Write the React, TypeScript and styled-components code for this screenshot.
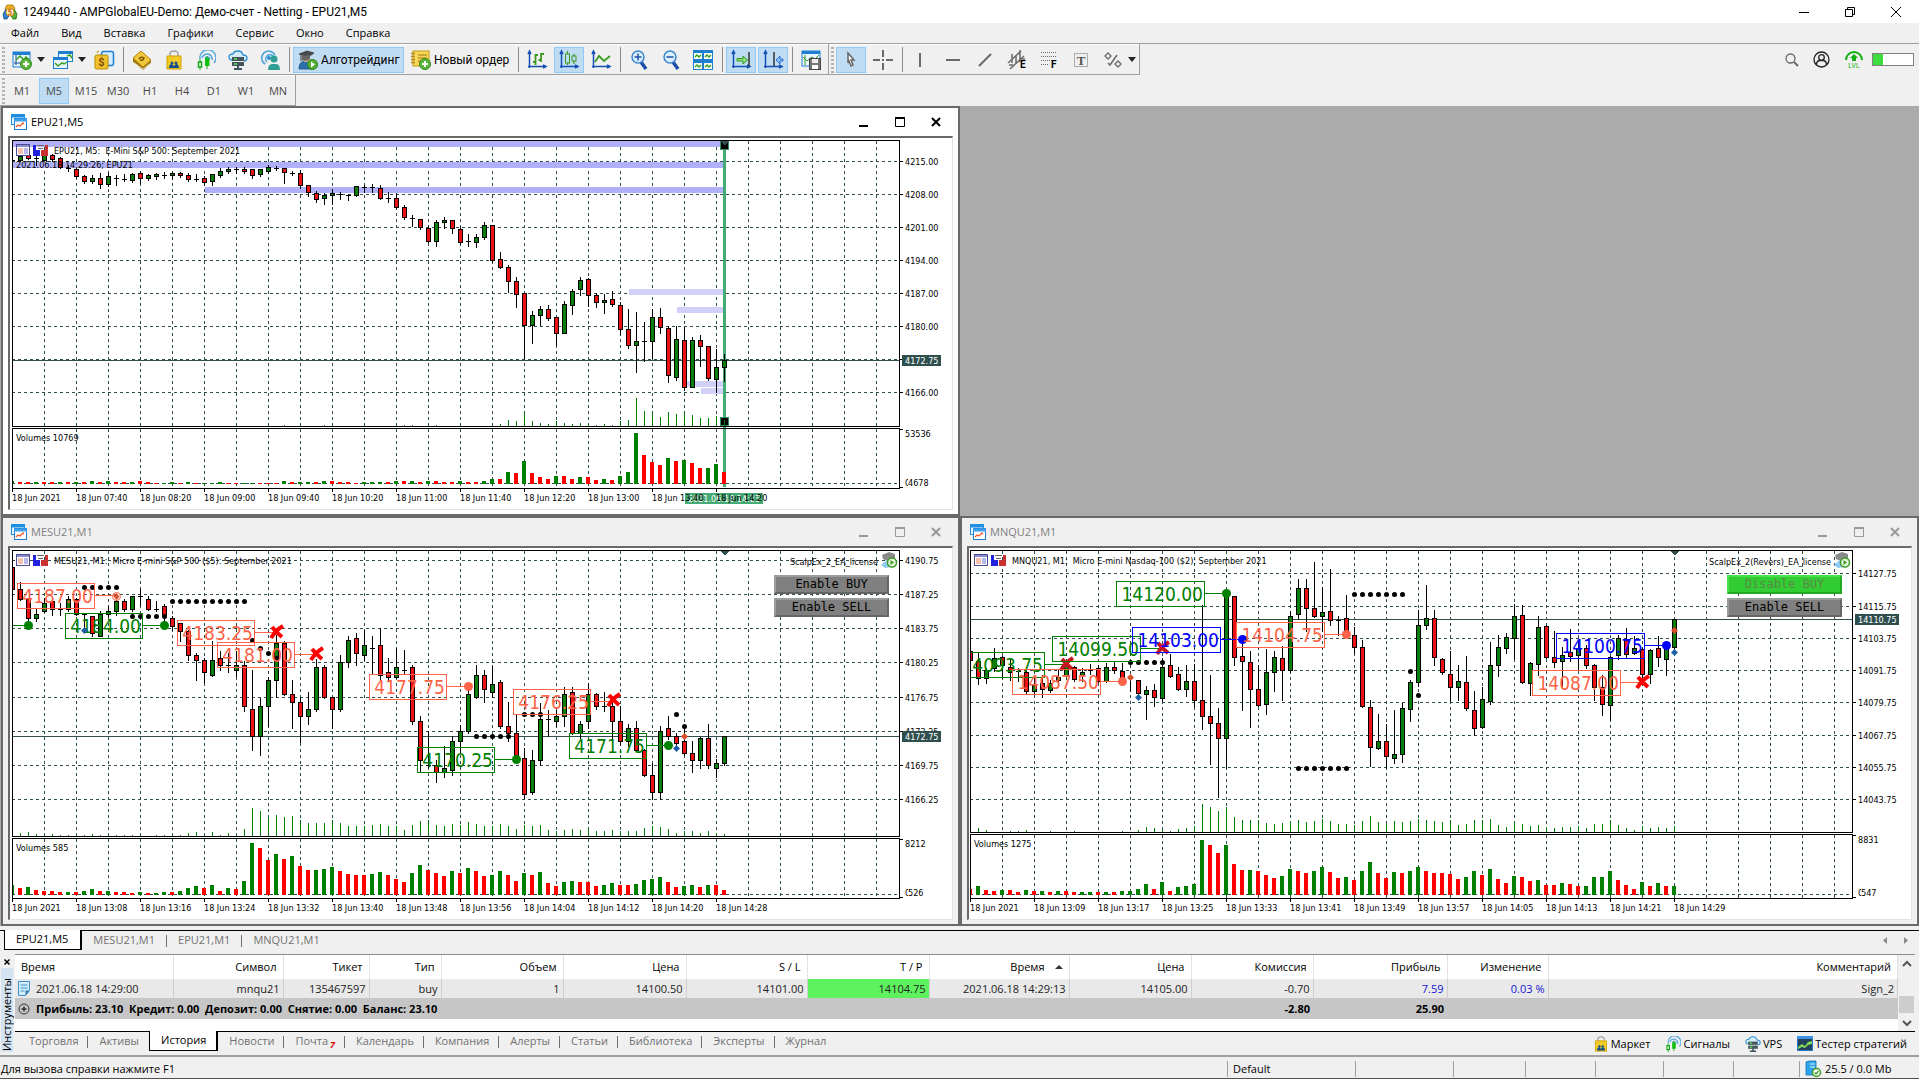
import React from 'react';
import styled, { createGlobalStyle, css } from 'styled-components';

const UI_FONT = '"Open Sans", "Noto Sans", sans-serif';
const CHART_FONT = '"DejaVu Sans Condensed", "DejaVu Sans", sans-serif';
const FACE = '#f0f0f0';
const SLATE = '#2f4f4f';
const TOMATO = '#ff6347';
const GREEN = '#008000';
const BLUE = '#0000ff';

const GlobalStyle = createGlobalStyle`
  * { box-sizing: border-box; }
  html, body { margin: 0; padding: 0; }
  body { font-family: ${UI_FONT}; font-size: 11px; line-height: 16px; color: #000; background: ${FACE}; overflow: hidden; }
  button { font: inherit; color: inherit; background: none; border: 0; padding: 0; margin: 0; cursor: default; }
  svg { display: block; flex: none; }
`;

/* ---------- frame ---------- */

const Page = styled.div`
  display: flex;
  flex-direction: column;
  min-height: 100vh;
  background: ${FACE};
`;

const TitleBar = styled.header`
  display: flex;
  align-items: center;
  height: 23px;
  padding-left: 2px;
  background: #fff;
`;

const TitleText = styled.h1`
  flex: 1;
  margin: 0 0 0 5px;
  font-family: Roboto, "Open Sans", sans-serif;
  font-size: 12px;
  line-height: 16px;
  font-weight: 400;
`;

const CaptionButton = styled.button`
  display: grid;
  place-items: center;
  width: 46px;
  height: 22px;
`;

const MenuBar = styled.nav`
  display: flex;
  height: 21px;
  border-bottom: 1px solid #a0a0a0;
`;

const MenuItem = styled.button`
  padding: 0 11px;
`;

const ToolRow = styled.div`
  display: flex;
  align-items: stretch;
  height: 31px;
`;

const ToolBar = styled.div`
  display: flex;
  align-items: center;
  gap: 2px;
  padding: 2px 2px 1px;
  border-right: 1px solid #a0a0a0;
  border-bottom: 1px solid #a0a0a0;
  box-shadow: inset 0 1px 0 #fff;
`;

const Grip = styled.span`
  width: 3px;
  height: 26px;
  background: repeating-linear-gradient(#b4b4b4 0 2px, transparent 2px 4px);
`;

const ToolButton = styled.button<{ $on?: boolean; $w?: number }>`
  display: flex;
  align-items: center;
  justify-content: ${(p) => (p.$w ? 'flex-start' : 'center')};
  gap: 3px;
  width: ${(p) => p.$w ?? 30}px;
  height: 26px;
  padding: 0 ${(p) => (p.$w ? 4 : 0)}px;
  white-space: nowrap;
  font-family: Roboto, "Open Sans", sans-serif;
  font-size: 12px;
  border: 1px solid transparent;
  ${(p) =>
    p.$on &&
    css`
      background: #c0dcf3;
      border-color: #90c8f6;
    `}
`;

const CaretButton = styled.button`
  display: grid;
  place-items: center;
  width: 11px;
  height: 26px;
  margin-left: -4px;
`;

const ToolSep = styled.span`
  width: 1px;
  height: 25px;
  margin: 0 1px 0 2px;
  background: #8c8c8c;
`;

const PeriodButton = styled(ToolButton)`
  color: #4a4a4a;
  font-family: ${UI_FONT};
  font-size: 11px;
`;

const RowEnd = styled.div`
  display: flex;
  flex: 1;
  align-items: center;
  justify-content: flex-end;
  gap: 14px;
  padding-right: 5px;
`;

const Battery = styled.span`
  width: 42px;
  height: 13px;
  margin-left: -6px;
  border: 1px solid #808080;
  background: linear-gradient(90deg, #3fdc3f 10px, #fff 10px);
`;

/* ---------- chart windows ---------- */

const Workspace = styled.main`
  display: grid;
  flex: 1;
  grid-template-columns: 1fr 1fr;
  grid-template-rows: 1fr 1fr;
  min-height: 820px;
  padding-left: 1px;
  background: #ababab;
`;

const Window = styled.section<{ $active?: boolean; $row: number; $col: number }>`
  display: flex;
  flex-direction: column;
  grid-row: ${(p) => p.$row};
  grid-column: ${(p) => p.$col};
  min-width: 0;
  padding: 0 5px 4px;
  border: 2px solid #696969;
  background: ${(p) => (p.$active ? '#fff' : FACE)};
  color: ${(p) => (p.$active ? '#000' : '#808080')};
`;

const WindowHead = styled.div`
  display: flex;
  align-items: center;
  height: 28px;
  padding: 0 6px 0 3px;
`;

const WindowTitle = styled.h2`
  flex: 1;
  margin: 0 0 0 4px;
  font-size: 11px;
  line-height: 16px;
  font-weight: 400;
  color: inherit;
`;

const WindowButton = styled.button`
  display: grid;
  place-items: center;
  width: 36px;
  height: 20px;
  &:last-child { width: 22px; margin-left: 7px; }
`;

const Client = styled.div`
  position: relative;
  flex: 1;
  min-height: 0;
  overflow: hidden;
  border: solid #696969;
  border-width: 2px 1px 1px 2px;
  border-right-color: #e3e3e3;
  border-bottom-color: #e3e3e3;
  background: #fff;
`;

const ExpertPanel = styled.div<{ $right: number }>`
  position: absolute;
  top: 27px;
  right: ${(p) => p.$right}px;
  display: flex;
  flex-direction: column;
  gap: 4px;
  width: 115px;
`;

const ExpertButton = styled.button<{ $live?: boolean }>`
  height: 19px;
  border: 2px solid;
  border-color: ${(p) => (p.$live ? '#4be04b #1faa1f #1faa1f #4be04b' : '#9c9c9c #666 #666 #9c9c9c')};
  background: ${(p) => (p.$live ? '#32cd32' : '#808080')};
  color: ${(p) => (p.$live ? '#5a8a4a' : '#000')};
  font-family: "DejaVu Sans Mono", "Liberation Mono", monospace;
  font-size: 12px;
  line-height: 15px;
`;

/* ---------- bottom area ---------- */

const TabStrip = styled.div`
  display: flex;
  height: 20px;
  margin-top: 4px;
  padding-left: 4px;
  border-top: 1px solid #000;
`;

const StripTab = styled.button<{ $on?: boolean; $line?: boolean }>`
  position: relative;
  height: 19px;
  padding: 0 12px 2px 11px;
  color: ${(p) => (p.$on ? '#000' : '#707070')};
  ${(p) =>
    p.$on &&
    css`
      height: 20px;
      margin-top: -1px;
      background: #fff;
      border: solid #000;
      border-width: 0 2px 1px 1px;
    `}
  ${(p) =>
    p.$line &&
    css`
      &::after { content: ''; position: absolute; right: 0; top: 4px; width: 1px; height: 12px; background: #707070; }
    `}
`;

const StripEnd = styled.div`
  display: flex;
  flex: 1;
  justify-content: flex-end;
  align-items: center;
  gap: 17px;
  padding-right: 10px;
`;

const Toolbox = styled.section`
  display: grid;
  grid-template-columns: 15px 1fr 4px;
  height: 103px;
  margin-top: 4px;
  border-bottom: 2px solid #a0a0a0;
`;

const ToolboxRail = styled.div`
  display: flex;
  flex-direction: column;
  align-items: center;
  padding: 1px 1px 3px 0;
`;

const RailClose = styled.button`
  height: 13px;
  display: grid;
  place-items: center;
`;

const RailName = styled.h2`
  flex: 1;
  width: 12px;
  margin: 0;
  padding-top: 1px;
  background: #d3e3f2;
  writing-mode: vertical-rl;
  transform: rotate(180deg);
  font-size: 11px;
  line-height: 12px;
  font-weight: 400;
`;

const ToolboxBody = styled.div`
  display: flex;
  flex-direction: column;
  min-width: 0;
  border-top: 1px solid #8c8c8c;
`;

const Grid = styled.div`
  display: flex;
  height: 76px;
  background: #fff;
`;

const Deals = styled.table`
  flex: 1;
  align-self: flex-start;
  width: 0;
  table-layout: fixed;
  border-collapse: collapse;
`;

const HeadCell = styled.th<{ $left?: boolean }>`
  height: 24px;
  padding: 0 6px;
  font-weight: 400;
  text-align: ${(p) => (p.$left ? 'left' : 'right')};
  white-space: nowrap;
  border-right: 1px solid #e2e2e2;
  svg { display: inline-block; margin-left: 10px; vertical-align: 2px; }
`;

const Cell = styled.td<{ $tone?: 'profit' | 'hit'; $left?: boolean }>`
  height: 19px;
  padding: 0 3px;
  text-align: ${(p) => (p.$left ? 'left' : 'right')};
  white-space: nowrap;
  background: ${(p) => (p.$tone === 'hit' ? '#5ef25e' : '#e9e9e9')};
  color: ${(p) => (p.$tone === 'profit' ? '#1414d8' : '#222')};
  border-right: 1px solid #cfcfcf;
`;

const CellInner = styled.span`
  display: flex;
  align-items: center;
  gap: 6px;
`;

const SumCell = styled.td`
  height: 21px;
  padding: 0 3px;
  background: #c6c6c6;
  font-weight: 700;
  text-align: right;
  white-space: nowrap;
`;

const Scroll = styled.div`
  display: flex;
  flex-direction: column;
  justify-content: space-between;
  align-items: center;
  width: 17px;
  background: ${FACE};
`;

const ScrollThumb = styled.span`
  width: 15px;
  height: 17px;
  margin: auto 0 1px;
  background: #cdcdcd;
`;

const ScrollButton = styled.button`
  display: grid;
  place-items: center;
  width: 17px;
  height: 17px;
`;

const PanelTabs = styled.div`
  display: flex;
  height: 22px;
  padding-left: 3px;
  border-top: 1px solid #000;
`;

const PanelTab = styled(StripTab)`
  height: 20px;
  padding: 0 10px 2px 11px;
`;

const Unread = styled.sub`
  color: #e00000;
  font-size: 9px;
  font-weight: 700;
  font-style: italic;
  line-height: 0;
  margin-left: 2px;
`;

const Services = styled.div`
  display: flex;
  flex: 1;
  justify-content: flex-end;
  align-items: center;
  gap: 15px;
  padding: 2px 8px 0 0;
`;

const Service = styled.button`
  display: flex;
  align-items: center;
  gap: 2px;
  height: 20px;
`;

const StatusBar = styled.footer`
  display: flex;
  align-items: stretch;
  height: 22px;
  padding: 4px 0 1px 1px;
  border-bottom: 1px solid #505050;
`;

const StatusField = styled.span<{ $w?: number }>`
  display: flex;
  align-items: center;
  gap: 4px;
  padding-left: 5px;
  ${(p) => (p.$w ? `width: ${p.$w}px; border-left: 1px solid #a0a0a0;` : 'flex: 1; padding-left: 0;')}
`;

/* ---------- icons ---------- */

const Svg = ({ s = 20, h, children }: { s?: number; h?: number; children: React.ReactNode }) => (
  <svg width={s} height={h ?? s} viewBox={`0 0 ${s} ${h ?? s}`} fill="none" overflow="visible" aria-hidden="true">
    {children}
  </svg>
);

const PlusBadge = ({ x = 14, y = 14 }) => (
  <g>
    <circle cx={x} cy={y} r="5.5" fill="#5cb83a" stroke="#2f8a1a" />
    <path d={`M${x - 3} ${y}h6M${x} ${y - 3}v6`} stroke="#fff" strokeWidth="2" />
  </g>
);

const Caret = () => (
  <Svg s={8} h={5}>
    <path d="M0 0h8L4 5z" fill="#222" />
  </Svg>
);

const AppLogo = () => (
  <Svg s={16}>
    <path d="M5 1h6l2 4-2 3H5L3 5z" fill="#f0b323" stroke="#a87408" strokeWidth=".8" />
    <path d="M1 10l3-5 4 5-3 5H2z" fill="#2f7fd0" stroke="#174f90" strokeWidth=".8" />
    <path d="M15 10l-3-5-4 5 3 5h3z" fill="#53ad36" stroke="#2a7016" strokeWidth=".8" />
    <circle cx="8" cy="8" r="4" fill="#fff6dc" stroke="#d08a10" />
    <text x="8" y="11" fontSize="8" fontWeight="700" textAnchor="middle" fill="#d06a00">5</text>
  </Svg>
);

const NewChartIcon = () => (
  <Svg>
    <rect x="1" y="2" width="17" height="15" fill="#eaf5ff" stroke="#1e7fd0" />
    <path d="M1 3.500h17" stroke="#1e7fd0" strokeWidth="3" />
    <path d="M4 5v10M2 13h12" stroke="#1a4f90" />
    <path d="M4 10l4-4 4 4 2-3 3 3" stroke="#3da01e" strokeWidth="1.500" />
    <PlusBadge />
  </Svg>
);

const ProfilesIcon = () => (
  <Svg>
    <rect x="5.500" y="1.500" width="14" height="10" fill="#eaf5ff" stroke="#1e7fd0" />
    <path d="M5 2.500h15" stroke="#1e7fd0" strokeWidth="3" />
    <path d="M14 6l3-1 2 3" stroke="#3da01e" strokeWidth="1.500" />
    <rect x=".5" y="7.500" width="14" height="11" fill="#eaf5ff" stroke="#1e7fd0" />
    <path d="M0 8.500h15" stroke="#1e7fd0" strokeWidth="3" />
    <path d="M2 13l3 3 4-3 2 1 3-2" stroke="#3da01e" strokeWidth="1.500" />
  </Svg>
);

const SymbolsIcon = () => (
  <Svg>
    <rect x="7.500" y="1.500" width="12" height="14" rx="2" fill="#d4ecff" stroke="#1e7fd0" strokeWidth="1.500" />
    <path d="M3 3q0-2 2-2" stroke="#b58a00" />
    <rect x="1" y="5" width="13" height="14" rx="1.500" fill="#f2c12e" stroke="#b58a00" />
    <text x="7.500" y="16" fontSize="11" fontWeight="700" textAnchor="middle" fill="#7a4d00">$</text>
  </Svg>
);

const EditorIcon = () => (
  <Svg>
    <path d="M1 8l8-7 10 9v3l-8 7L1 12z" fill="#9a7410" />
    <path d="M1 8l8-7 10 9-8 7z" fill="#f2c93c" stroke="#b8860b" />
    <path d="M1 12l10 7 8-6" stroke="#e8dcae" />
    <path d="M7 9q2-3 5-1-1 3-4 2" stroke="#7a5600" strokeWidth="1.500" />
  </Svg>
);

const MarketIcon = ({ s = 20 }) => (
  <svg width={s} height={s} viewBox="0 0 20 20" fill="none" aria-hidden="true">
    <path d="M6 8V4q0-3 4-3t4 3v4" stroke="#a3a3a3" strokeWidth="1.500" />
    <path d="M3 6h14v13H3z" fill="#f3cb26" stroke="#cda100" />
    <circle cx="8" cy="13" r="1.500" fill="#134f8c" />
    <circle cx="12" cy="13" r="1.500" fill="#134f8c" />
    <path d="M5 18q0-4 3-4l2 2 2-2q3 0 3 4z" fill="#134f8c" />
  </svg>
);

const SignalsIcon = ({ s = 20 }) => (
  <svg width={s} height={s} viewBox="0 0 20 20" fill="none" aria-hidden="true">
    <path d="M4 9a8 8 0 1 1 14 4M6 8a5 5 0 0 1 10 2M9 8a3 3 0 0 1 5 1" stroke="#5aa9de" strokeWidth="1.500" />
    <path d="M4 9v11M11 6v13" stroke="#14a514" />
    <rect x="2.500" y="12" width="3" height="5" fill="#fff" stroke="#14a514" strokeWidth="1.500" />
    <rect x="9" y="8" width="4.500" height="8" fill="#10c010" />
  </svg>
);

const VpsIcon = ({ s = 20 }) => (
  <svg width={s} height={s} viewBox="0 0 20 20" fill="none" aria-hidden="true">
    <path d="M4 10q-3 0-3-3t4-3q1-3 5-3t5 4q4 0 4 3t-3 3" fill="#d6ecfb" stroke="#2f8fd4" strokeWidth="1.300" />
    <rect x="4" y="7" width="12" height="4" fill="#41555a" />
    <rect x="4" y="12" width="12" height="4" fill="#41555a" />
    <path d="M6 9h3M6 14h3" stroke="#5de25d" strokeWidth="1.500" />
    <path d="M10 16v3M6 19h8" stroke="#41555a" strokeWidth="2" />
  </svg>
);

const CommunityIcon = () => (
  <Svg>
    <path d="M5 14a7 7 0 1 1 10-9M7 12a4 4 0 1 1 6-6" stroke="#4aa3da" strokeWidth="1.500" />
    <circle cx="9" cy="8" r="2" fill="#2b8fd0" />
    <circle cx="14" cy="9" r="3.500" fill="#2f9e94" />
    <path d="M8 20q0-6 4-6h4q4 0 4 6z" fill="#2f9e94" />
  </Svg>
);

const AlgoIcon = ({ s = 20 }) => (
  <svg width={s} height={s} viewBox="0 0 20 20" fill="none" aria-hidden="true">
    <path d="M1 19q0-7 5-8h3q5 1 5 8z" fill="#2c6fad" stroke="#1c4a78" strokeWidth=".8" />
    <circle cx="8" cy="8" r="4" fill="#d9b48f" />
    <path d="M1 4l8-3 7 2-6 4z" fill="#4a4a4a" stroke="#222" strokeWidth=".6" />
    <path d="M4 6v4q5 2 8-1V5" fill="#666" />
    <path d="M3 5v6" stroke="#333" />
    <circle cx="14.500" cy="14.500" r="5" fill="#55b036" stroke="#2e7f17" />
    <path d="M13 11.500l4 3-4 3z" fill="#fff" />
  </svg>
);

const OrderIcon = () => (
  <Svg>
    <rect x="2" y="1" width="16" height="15" fill="#f7d65a" stroke="#c79a10" />
    <path d="M7 5h9M7 8h9M7 11h9" stroke="#9a7410" />
    <path d="M0 3.500h4M0 6.500h4M0 9.500h4M0 12.500h4" stroke="#b08a20" strokeWidth="1.500" />
    <PlusBadge x={14} y={14} />
  </Svg>
);

const Axes = () => (
  <path d="M2.500 18V2M1 16.500h17M1 4l1.500-3L4 4M16 15l3 1.500-3 1.500" stroke="#1450b4" strokeWidth="1.500" />
);

const BarsIcon = () => (
  <Svg>
    <Axes />
    <path d="M8.500 4v11M6 12h2.500M8.500 5H11M14 3v9M11.500 10H14M14 4h3" stroke="#3a9a22" strokeWidth="1.800" />
  </Svg>
);
const CandlesIcon = () => (
  <Svg>
    <Axes />
    <path d="M8.500 1v14M15 4v10" stroke="#3a9a22" strokeWidth="1.200" />
    <rect x="6.500" y="4" width="4" height="9" fill="#c0dcf3" stroke="#3a9a22" />
    <rect x="13" y="6" width="4" height="5" fill="#c0dcf3" stroke="#3a9a22" />
  </Svg>
);
const LineIcon = () => (
  <Svg>
    <Axes />
    <path d="M4 12l4-6 5 5 6-5" stroke="#3a9a22" strokeWidth="1.800" />
  </Svg>
);

const ZoomIcon = ({ plus }: { plus?: boolean }) => (
  <Svg>
    <path d="M12 12l5 7" stroke="#1d4fa8" strokeWidth="3.500" />
    <circle cx="9" cy="7" r="6" fill="#dcefff" stroke="#3a86cc" strokeWidth="1.500" />
    <path d={plus ? 'M5.500 7h7M9 3.500v7' : 'M5.500 7h7'} stroke="#1d4fa8" strokeWidth="1.500" />
  </Svg>
);

const TileIcon = () => (
  <Svg>
    {[[0, 0], [10, 0], [0, 10], [10, 10]].map(([x, y]) => (
      <g key={`${x}${y}`} transform={`translate(${x} ${y})`}>
        <rect x=".5" y=".5" width="9" height="9" fill="#f4fff0" stroke="#1e7fd0" />
        <path d="M0 1.500h10" stroke="#1e7fd0" strokeWidth="3" />
        <path d="M2 7l2-2 2 2 2-2" stroke="#3a9a22" strokeWidth="1.300" />
      </g>
    ))}
  </Svg>
);

const ScrollEndIcon = () => (
  <Svg>
    <Axes />
    <path d="M18 2v14" stroke="#333" strokeWidth="1.500" />
    <path d="M6 8.500h6V6l4.500 4-4.500 4v-3H6z" fill="#8ee07a" stroke="#2f9a1a" />
  </Svg>
);
const ShiftIcon = () => (
  <Svg>
    <Axes />
    <path d="M11 2v14" stroke="#333" strokeWidth="1.500" />
    <path d="M20 9h-3V6l-4 4 4 4v-3h3z" fill="#8cc0f5" stroke="#2a70d0" />
  </Svg>
);

const TemplateIcon = () => (
  <Svg>
    <rect x="1" y="1" width="18" height="15" fill="#eaf5ff" stroke="#1e7fd0" />
    <path d="M1 2.500h18" stroke="#1e7fd0" strokeWidth="3" />
    <path d="M4 5v10M2 7l4 4 5-4 3 2 4-4" stroke="#3a9a22" />
    <rect x="8.500" y="8.500" width="11" height="11" fill="#787878" stroke="#444" />
    <rect x="11" y="9" width="6" height="4" fill="#eee" />
    <rect x="11" y="15" width="6" height="4" fill="#fff" />
  </Svg>
);

const CursorIcon = () => (
  <Svg>
    <path d="M7 3l6 7h-3l2 5-2 1-2-5-1 2z" fill="#fff" stroke="#666" strokeWidth="1.500" />
  </Svg>
);
const CrosshairIcon = () => (
  <Svg>
    <path d="M0 10h7M13 10h7M10 0v7M10 13v7M9 10h2" stroke="#6a6a6a" strokeWidth="2" />
  </Svg>
);
const StrokeIcon = ({ d }: { d: string }) => (
  <Svg>
    <path d={d} stroke="#6a6a6a" strokeWidth="2" />
  </Svg>
);
const ChannelIcon = () => (
  <Svg>
    <path d="M1 13L14 1M3 19L17 6M5 4v9M9 5v9M13 0v12M2 15h4M12 9h6" stroke="#6a6a6a" strokeWidth="1.500" />
    <text x="13" y="18" fontSize="10" fontWeight="700" fill="#000">E</text>
  </Svg>
);
const FiboIcon = () => (
  <Svg>
    <path d="M2 2.500h15M2 6.500h15M2 10.500h15M2 14.500h7" stroke="#6a6a6a" strokeDasharray="1 1" />
    <text x="12" y="18" fontSize="10" fontWeight="700" fill="#000">F</text>
  </Svg>
);
const TextIcon = () => (
  <Svg>
    <rect x="3.500" y="3.500" width="13" height="13" stroke="#6a6a6a" strokeDasharray="1 1" />
    <text x="10" y="15" fontSize="13" fontWeight="700" textAnchor="middle" fill="#555" fontFamily="Liberation Serif, serif">T</text>
  </Svg>
);
const ShapesIcon = () => (
  <Svg>
    <path d="M5 3l3 3-3 3-3-3zM15 11l3 3-3 3-3-3z" stroke="#6a6a6a" strokeWidth="1.300" />
    <path d="M5 13l2 2 7-10" stroke="#6a6a6a" strokeWidth="1.500" />
  </Svg>
);

const SearchIcon = () => (
  <Svg s={14}>
    <circle cx="5.500" cy="5.500" r="4.500" stroke="#6a6a6a" strokeWidth="1.300" />
    <path d="M9 9l4 4" stroke="#6a6a6a" strokeWidth="2" />
  </Svg>
);
const UserIcon = () => (
  <Svg s={17}>
    <circle cx="8.500" cy="8.500" r="7.500" stroke="#222" strokeWidth="1.300" />
    <circle cx="8.500" cy="6.500" r="2.800" stroke="#222" strokeWidth="1.300" />
    <path d="M3.500 14q0-4 3-4.500h4q3 .5 3 4.500" stroke="#222" strokeWidth="1.300" />
  </Svg>
);
const LevelIcon = () => (
  <Svg s={20}>
    <path d="M2 10a8 8 0 0 1 16 0" stroke="#12b012" strokeWidth="2" />
    <path d="M10 4l4 4h-2v3H8V8H6z" fill="#12b012" />
    <text x="10" y="18" fontSize="7" textAnchor="middle" fill="#12b012" fontFamily="Roboto, sans-serif">LVL</text>
  </Svg>
);

const ChartWindowIcon = () => (
  <Svg s={16}>
    <rect x=".5" y=".5" width="13" height="10" fill="#e6f4ff" stroke="#1e8fe0" />
    <path d="M0 2h14" stroke="#1e8fe0" strokeWidth="3" />
    <rect x="3.500" y="4.500" width="12" height="11" fill="#fff" stroke="#1e7fd0" />
    <path d="M3 6h13" stroke="#3aa0ee" strokeWidth="3" />
    <path d="M5 13l2-2 2 1 3-3 1 1" stroke="#f05a28" strokeWidth="1.300" />
  </Svg>
);

const DocIcon = () => (
  <Svg s={12} h={15}>
    <path d="M.5.5h11v9l-4 5h-7z" fill="#d2edfb" stroke="#3a92c8" />
    <path d="M2.500 4h7M2.500 7h7M2.500 10h4" stroke="#3a92c8" />
    <path d="M7.500 14.500l4-5h-4z" fill="#2a78b0" />
  </Svg>
);
const ExpandIcon = () => (
  <Svg s={12}>
    <circle cx="6" cy="6" r="5" stroke="#333" />
    <path d="M3.500 6h5M6 3.500v5" stroke="#333" strokeWidth="1.500" />
  </Svg>
);
const TesterIcon = () => (
  <Svg s={16}>
    <rect x=".5" y=".5" width="15" height="14" fill="#23405c" stroke="#2a78c8" />
    <path d="M0 1.500h16" stroke="#3a92e0" strokeWidth="3" />
    <path d="M1 11l4-3 3 2 3-4 4-1v3l-4 1-3 3-3-1-4 2z" fill="#7ed957" />
  </Svg>
);
const TrafficIcon = () => (
  <Svg s={16}>
    <path d="M1 1l3-1h7v12l-3 2H1z" fill="#2fa4ea" stroke="#1470b4" strokeWidth=".8" />
    <path d="M5 3h5M5 6h5" stroke="#d8f0ff" />
    <circle cx="11.500" cy="11.500" r="4" fill="#fff" stroke="#3a9a22" strokeWidth="1.500" />
    <path d="M9.500 11.500l1.500 1.500 2.500-3" stroke="#3a9a22" strokeWidth="1.300" />
  </Svg>
);

/* ---------- chart drawing ---------- */

/* Prices and bar heights are stored in thirds of a pixel below the window's top edge. */
const px = (v: number) => Math.floor(v / 3);

type Mark = 'dot' | 'cross' | 'ring';
interface PriceTag { x: number; y: number; text: string; color: string; tx: number; ty: number; mark: Mark }
interface ChartSpec {
  shift: number;
  left: number;
  right: number;
  mainBottom: number;
  title: string;
  levels: number[];
  prices: string[];
  last: number;
  lastText: string;
  times: string[];
  candles: string;
  ticks: string;
  ticksFrom: number;
  volumes: string;
  volBase: number;
  volName: string;
  volMax: string;
  volMin: string;
  dots: [number, number, number][];
  tags: PriceTag[];
  arrows: [number, number, string][];
  comment?: string;
  expert?: string;
  marker: number;
}

/* Every candle: direction, high, body top, body bottom, low. */
const EPU: ChartSpec = {
  shift: 10, left: 12, right: 899, mainBottom: 321,
  title: 'EPU21, M5:  E-Mini S&P 500: September 2021',
  comment: '2021.06.18 14:29:26; EPU21',
  levels: [169, 268, 367, 466, 565, 664, 763, 862],
  prices: ['4215.00', '4208.00', '4201.00', '4194.00', '4187.00', '4180.00', '', '4166.00'],
  last: 766, lastText: '4172.75',
  times: ['18 Jun 2021', '18 Jun 07:40', '18 Jun 08:20', '18 Jun 09:00', '18 Jun 09:40', '18 Jun 10:20', '18 Jun 11:00', '18 Jun 11:40', '18 Jun 12:20', '18 Jun 13:00', '18 Jun 13:40', '18 Jun 14:20'],
  candles: `d 165 167 167 170;g 150 153 167 168;r 148 150 160 163;d 150 160 160 182;g 148 150 165 167;r 148 151 164 168;r 158 160 187 190;d 182 190 190 200;r 190 193 214 216;r 212 214 230 234;g 212 220 230 234;r 205 220 238 250;g 206 214 238 243;d 212 221 221 240;d 207 223 223 228;g 204 208 227 232;r 200 205 220 234;g 207 211 221 225;g 205 208 214 224;d 202 210 210 221;g 202 205 211 222;r 202 205 212 216;r 205 210 223 230;d 208 222 222 228;r 214 220 233 240;g 208 208 229 240;g 189 199 211 216;g 187 193 199 204;d 187 193 193 204;r 187 193 200 204;r 193 193 211 220;g 193 193 208 214;g 181 187 200 204;d 183 189 189 195;r 190 190 202 234;d 198 204 204 212;r 196 205 241 250;r 241 241 262 275;r 259 265 284 291;g 265 271 280 299;g 253 265 271 299;d 262 268 268 284;d 268 270 270 285;g 244 244 271 273;d 240 246 246 262;d 237 246 246 262;r 241 250 280 283;d 262 280 280 293;r 264 280 307 314;r 300 307 338 342;d 330 339 339 365;r 343 343 367 374;r 364 370 409 411;g 345 352 409 423;g 336 346 352 370;r 346 346 370 385;r 364 373 412 418;d 388 410 410 425;g 388 397 412 428;g 351 361 397 402;r 361 361 466 471;r 441 463 487 491;r 480 487 529 563;r 516 529 569 608;r 565 565 662 760;g 618 631 662 714;g 605 613 631 660;r 600 613 641 645;r 637 637 686 720;g 590 598 686 686;g 552 559 602 627;g 516 526 553 570;r 520 523 571 605;r 565 571 593 608;g 568 586 593 624;r 558 583 599 605;r 592 601 674 688;r 612 673 721 731;g 621 709 721 801;d 651 708 708 770;g 612 637 710 760;r 609 637 667 686;r 664 670 811 833;g 663 703 818 826;r 666 706 848 857;g 697 706 848 848;r 690 706 724 785;r 724 724 821 827;g 733 787 824 863;g 747 766 788 828`,
  ticksFrom: 34,
  ticks: '960 963 963 963 963 960 963 963 963 963 963 963 963 963 963 960 960 963 963 960 963 963 963 963 963 963 960 957 945 948 926 948 954 957 950 954 957 954 957 960 957 960 950 945 879 918 926 936 921 927 926 930 939 939 933 945',
  volumes: 'g1128 r1131 r1131 g1131 r1131 r1132 g1131 r1132 g1131 r1131 g1130 r1131 g1128 r1131 r1132 g1131 r1130 r1131 r1134 g1134 g1131 r1134 g1131 r1134 g1134 g1134 g1131 r1134 r1134 g1134 g1134 r1134 r1134 r1134 g1128 r1131 g1131 g1131 r1131 g1128 r1128 r1131 r1131 r1134 g1131 g1131 g1131 r1131 g1128 r1128 g1128 r1131 g1128 r1128 r1131 r1131 g1128 r1131 r1131 g1128 g1122 r1122 g1101 r1104 g1068 r1104 r1116 r1122 g1113 r1113 r1122 g1116 r1116 r1125 g1122 r1125 g1113 g1101 g984 r1050 r1071 r1080 g1059 r1068 g1065 r1074 r1089 g1089 g1077 r1101',
  volBase: 1134, volName: 'Volumes 10769', volMax: '53536', volMin: '4678',
  dots: [], tags: [], arrows: [], marker: 724,
};

const MESU: ChartSpec = {
  shift: 10, left: 12, right: 899, mainBottom: 321,
  title: 'MESU21, M1:  Micro E-mini S&P 500 ($5): September 2021',
  levels: [136, 238, 340, 442, 547, 649, 751, 853],
  prices: ['4190.75', '4187.25', '4183.75', '4180.25', '4176.75', '4173.25', '4169.75', '4166.25'],
  last: 664, lastText: '4172.75',
  times: ['18 Jun 2021', '18 Jun 13:08', '18 Jun 13:16', '18 Jun 13:24', '18 Jun 13:32', '18 Jun 13:40', '18 Jun 13:48', '18 Jun 13:56', '18 Jun 14:04', '18 Jun 14:12', '18 Jun 14:20', '18 Jun 14:28'],
  candles: `r 157 157 222 222;r 201 223 253 255;r 250 253 311 318;g 280 298 310 320;g 250 265 290 292;r 253 259 283 302;d 265 283 283 300;g 243 253 283 290;r 250 253 298 300;d 298 298 298 340;r 304 304 355 365;g 290 298 364 364;g 275 289 298 303;g 255 259 290 300;r 253 259 284 290;g 244 244 284 290;d 222 244 244 272;r 244 253 283 286;d 260 283 283 290;r 268 274 300 318;r 304 310 334 347;r 325 325 349 378;r 345 349 421 436;r 415 421 436 497;r 430 436 472 503;g 378 436 481 483;r 408 431 452 465;d 414 452 452 473;g 408 451 466 483;r 440 452 574 590;r 465 583 664 707;g 549 574 664 722;g 487 496 574 635;g 360 385 496 548;r 380 385 538 540;r 496 538 562 641;r 551 562 604 681;g 531 583 604 628;g 432 457 583 590;r 450 457 547 549;r 547 547 583 641;g 420 442 583 590;g 363 376 442 458;r 355 370 415 452;g 347 391 421 437;d 363 400 400 474;r 340 391 481 492;r 430 472 487 497;g 400 457 487 490;d 405 466 466 474;r 450 457 619 628;r 603 619 737 768;d 648 750 750 757;r 735 752 771 803;g 693 760 771 788;g 665 679 766 782;g 631 649 679 715;g 525 538 649 656;g 451 481 547 549;r 466 481 523 563;g 455 508 532 547;r 496 502 634 641;r 561 633 656 680;r 602 655 721 728;r 700 730 838 849;g 705 736 832 839;g 565 613 737 752;d 585 612 612 664;g 585 604 619 634;g 516 538 604 634;r 516 532 655 657;g 618 628 656 670;g 506 538 619 640;r 535 538 574 584;d 531 574 574 590;r 560 575 619 672;r 574 619 680 690;g 627 640 679 694;r 618 640 706 708;r 704 706 781 783;r 745 781 832 854;g 634 649 832 854;r 603 640 664 672;r 655 664 685 690;r 640 680 715 722;r 680 715 737 773;g 668 670 737 761;r 627 670 752 760;g 733 745 761 788;g 664 664 745 752`,
  ticksFrom: 1,
  ticks: '954 951 957 960 958 960 960 960 960 957 960 960 960 960 960 963 963 960 960 960 960 954 951 960 951 960 954 960 942 879 888 909 900 906 903 915 924 924 924 915 924 933 933 933 930 927 933 933 945 930 918 915 930 933 927 930 921 927 933 933 927 933 942 930 933 930 945 950 945 942 945 942 950 948 945 948 948 950 939 935 936 942 954 950 948 954 948 954 957',
  volumes: 'g1110 r1119 g1116 r1126 r1128 r1128 r1131 g1131 r1131 g1128 g1122 r1128 g1128 r1131 r1131 r1134 g1131 r1134 g1134 g1131 r1131 g1128 g1119 g1113 r1119 g1110 r1128 g1119 r1122 g1098 g984 r999 r1035 g1017 r1032 g1023 r1053 r1065 g1065 g1062 g1056 r1068 r1077 r1080 r1080 g1077 g1071 r1080 r1092 r1101 g1074 g1050 r1065 r1074 r1083 g1068 r1074 g1059 r1068 r1083 g1080 g1068 r1080 r1098 g1074 r1080 g1071 r1104 r1113 g1101 g1098 r1101 r1101 r1113 g1110 g1104 r1110 r1110 g1107 g1095 g1092 g1086 r1101 r1116 g1113 g1110 r1116 g1110 r1110 r1125',
  volBase: 1137, volName: 'Volumes 585', volMax: '8212', volMin: '526',
  dots: [[9, 13, 217], [15, 19, 304], [20, 29, 259], [30, 30, 376], [31, 31, 399], [32, 32, 415], [33, 33, 430], [58, 62, 664], [64, 66, 598], [83, 83, 598], [84, 84, 634]],
  tags: [
    { x: -246, y: 295, text: '4184.25', color: GREEN, tx: 85, ty: 331, mark: 'dot' },
    { x: 52, y: 205, text: '4187.00', color: TOMATO, tx: 349, ty: 244, mark: 'ring' },
    { x: 196, y: 295, text: '4184.00', color: GREEN, tx: 493, ty: 331, mark: 'dot' },
    { x: 532, y: 316, text: '4183.25', color: TOMATO, tx: 829, ty: 352, mark: 'cross' },
    { x: 652, y: 382, text: '4181.00', color: TOMATO, tx: 949, ty: 417, mark: 'cross' },
    { x: 1108, y: 478, text: '4177.75', color: TOMATO, tx: 1405, ty: 514, mark: 'dot' },
    { x: 1252, y: 697, text: '4170.25', color: GREEN, tx: 1549, ty: 734, mark: 'dot' },
    { x: 1540, y: 523, text: '4176.25', color: TOMATO, tx: 1841, ty: 557, mark: 'cross' },
    { x: 1708, y: 655, text: '4171.75', color: GREEN, tx: 2005, ty: 691, mark: 'dot' },
  ],
  arrows: [[253, 346, '#1e5fa8'], [2029, 699, '#1e5fa8'], [2053, 665, '#d9502a']],
  expert: 'ScalpEx_2_EA_license', marker: 724,
};

const MNQU: ChartSpec = {
  shift: 9, left: 10, right: 892, mainBottom: 317,
  title: 'MNQU21, M1:  Micro E-mini Nasdaq-100 ($2): September 2021',
  levels: [175, 274, 370, 466, 562, 661, 757, 853],
  prices: ['14127.75', '14115.75', '14103.75', '14091.75', '14079.75', '14067.75', '14055.75', '14043.75'],
  last: 313, lastText: '14110.75',
  times: ['18 Jun 2021', '18 Jun 13:09', '18 Jun 13:17', '18 Jun 13:25', '18 Jun 13:33', '18 Jun 13:41', '18 Jun 13:49', '18 Jun 13:57', '18 Jun 14:05', '18 Jun 14:13', '18 Jun 14:21', '18 Jun 14:29'],
  candles: `r 409 409 436 440;r 415 440 490 509;g 460 465 490 505;g 400 430 460 470;r 425 427 452 490;r 432 457 472 497;d 460 470 470 500;r 470 472 529 534;g 480 511 529 538;r 480 506 523 546;g 495 505 526 532;g 466 488 497 508;g 440 440 480 485;r 455 457 493 498;g 461 472 480 500;d 448 466 466 478;r 450 460 500 502;g 445 457 500 502;r 441 457 466 476;r 445 469 500 502;d 480 490 490 528;r 496 496 535 540;g 513 526 538 614;r 507 526 547 574;g 430 457 550 559;r 418 451 484 486;r 457 478 523 525;g 450 499 523 545;r 447 499 556 574;r 270 556 604 643;r 480 604 625 749;r 579 625 670 848;g 238 241 670 760;r 244 244 427 452;r 380 424 440 587;r 408 442 523 638;r 450 523 571 574;g 402 472 568 599;g 409 427 472 530;r 395 430 466 557;g 290 304 466 472;g 194 220 298 314;r 194 220 280 350;r 141 280 304 306;g 218 292 304 350;r 162 289 316 332;d 305 316 316 360;r 240 311 356 360;r 338 361 397 414;r 376 397 575 578;r 556 577 697 755;g 597 679 700 704;r 627 679 724 758;g 585 718 730 746;g 564 580 718 743;g 495 502 583 620;g 285 331 502 515;g 210 310 331 342;r 287 310 427 452;r 430 433 472 478;r 408 478 517 560;g 451 499 517 555;r 423 502 580 586;r 530 586 640 661;g 517 553 637 639;g 381 451 559 569;g 360 397 451 485;g 355 367 400 416;g 267 304 370 430;r 270 301 502 504;g 441 445 505 540;g 304 337 448 480;r 332 334 427 429;r 350 427 442 458;g 396 421 439 520;r 342 412 425 440;g 380 400 421 465;r 390 400 451 460;r 449 451 517 555;r 480 517 568 600;g 425 427 571 612;g 360 370 421 433;r 340 376 418 430;g 365 400 415 418;r 400 403 478 490;g 402 406 478 506;r 363 400 427 455;g 390 400 433 480;g 313 313 397 399`,
  ticksFrom: 1,
  ticks: '939 945 951 951 948 948 945 951 951 948 951 951 948 951 951 951 951 951 948 951 945 936 939 945 948 942 939 935 867 876 888 876 906 915 915 915 924 927 924 918 915 921 918 912 918 927 927 930 918 903 921 927 918 921 918 912 915 918 921 915 930 927 915 915 912 930 936 921 927 933 930 936 939 936 936 933 939 927 927 915 930 939 945 933 939 936 939 933',
  volumes: 'r1122 g1113 r1125 r1128 g1125 r1126 r1131 g1125 r1129 g1129 r1131 g1129 r1129 r1131 g1131 g1131 r1131 g1131 r1131 g1129 g1128 g1122 g1107 r1122 g1101 r1128 g1116 g1113 g1107 g975 r990 r1014 g990 r1047 r1065 g1065 r1068 r1080 r1089 g1083 g1062 r1068 r1074 g1068 g1056 r1071 r1089 g1086 r1095 g1068 g1041 r1074 r1089 g1071 r1074 g1068 g1056 r1068 r1074 r1074 r1077 r1092 g1086 g1068 r1080 g1062 r1092 r1104 g1083 r1086 r1098 g1095 r1110 r1110 g1104 r1107 r1113 g1113 g1086 g1086 g1068 r1095 r1110 r1122 g1101 r1113 g1104 r1113 g1113',
  volBase: 1137, volName: 'Volumes 1275', volMax: '8831', volMin: '547',
  dots: [[20, 24, 442], [48, 54, 238], [41, 47, 760], [55, 55, 469], [56, 56, 541]],
  tags: [
    { x: -12, y: 412, text: '14093.75', color: GREEN, tx: 319, ty: 447, mark: 'cross' },
    { x: 277, y: 364, text: '14099.50', color: GREEN, tx: 607, ty: 400, mark: 'cross' },
    { x: 157, y: 463, text: '14087.50', color: TOMATO, tx: 487, ty: 499, mark: 'dot' },
    { x: 469, y: 199, text: '14120.00', color: GREEN, tx: 799, ty: 236, mark: 'dot' },
    { x: 517, y: 337, text: '14103.00', color: BLUE, tx: 847, ty: 373, mark: 'dot' },
    { x: 829, y: 322, text: '14104.75', color: TOMATO, tx: 1159, ty: 358, mark: 'dot' },
    { x: 1789, y: 355, text: '14100.75', color: BLUE, tx: 2119, ty: 391, mark: 'dot' },
    { x: 1717, y: 466, text: '14087.00', color: TOMATO, tx: 2047, ty: 501, mark: 'cross' },
  ],
  arrows: [[511, 488, '#d9502a'], [535, 546, '#1e5fa8'], [2143, 347, '#d9502a'], [2143, 411, '#1e5fa8']],
  expert: 'ScalpEx_2(Revers)_EA_license', marker: 714,
};

const FILL: Record<string, string> = { g: '#0a7d0a', r: '#ee1111' };

const Tag = ({ tag, left }: { tag: PriceTag; left: number }) => {
  const w = tag.text.length > 7 ? 88 : 77;
  const x = px(tag.x);
  const y = px(tag.y);
  const tx = px(tag.tx);
  const ty = px(tag.ty);
  const visible = x + w > left;
  return (
    <g>
      <path d={`M${x + w} ${y + 12.5}H${tx}`} stroke={tag.color} shapeRendering="crispEdges" />
      {visible && (
        <g>
          <rect x={x + 0.5} y={y + 0.5} width={w} height={25} fill="none" stroke={tag.color} shapeRendering="crispEdges" />
          <text x={x + w - 1} y={y + 20} fontSize="19" textAnchor="end" fill={tag.color}>{tag.text}</text>
        </g>
      )}
      {tag.mark === 'dot' && <circle cx={tx + 0.5} cy={ty + 0.5} r="4.5" fill={tag.color} />}
      {tag.mark === 'ring' && (
        <g>
          <circle cx={tx + 0.5} cy={ty + 0.5} r="4" fill="none" stroke={tag.color} />
          <path d={`M${tx + 0.5} ${ty - 3}l3 3.500-3 3.500-3-3.500z`} fill="#d9502a" />
        </g>
      )}
      {tag.mark === 'cross' && (
        <path d={`M${tx - 4} ${ty - 5}q4 5 10 10M${tx + 7} ${ty - 6}q-7 4-12 12`} stroke={tag.color === GREEN ? '#c8141e' : '#ff0000'} strokeWidth="4" fill="none" />
      )}
    </g>
  );
};

const Chart = ({ spec, children }: { spec: ChartSpec; children?: React.ReactNode }) => {
  const { left, right, mainBottom } = spec;
  const volTop = mainBottom + 2;
  const columns: number[] = [];
  for (let x = left + 32; x < right; x += 32) columns.push(x);
  const clip = `plot-${spec.title.slice(0, 4)}`;
  const axisX = right + 6;
  return (
    <svg width="100%" height="100%" role="img" aria-label={spec.title} fontFamily={CHART_FONT} fontSize="9">
      <g transform={`translate(${-spec.shift} -33)`}>
        <clipPath id={clip}>
          <rect x={left} y={35} width={right - left} height={mainBottom - 35} />
        </clipPath>
        <g stroke={SLATE} strokeDasharray="3 3" shapeRendering="crispEdges">
          {columns.map((x) => (
            <path key={x} d={`M${x + 0.5} 36V${mainBottom}M${x + 0.5} ${volTop + 1}V383`} />
          ))}
          {spec.levels.map((y) => (
            <path key={y} d={`M${left} ${px(y) + 0.5}H${right}`} />
          ))}
          <path d={`M${left} ${px(spec.volBase) + 0.5}H${right}`} />
        </g>
        {children}
        <g clipPath={`url(#${clip})`} shapeRendering="crispEdges">
          {spec.ticks.split(' ').map((t, i) => {
            const top = px(+t);
            return <rect key={i} x={left + 8 * (i + spec.ticksFrom)} y={top} width={1} height={Math.max(0, mainBottom - top)} fill={GREEN} />;
          })}
          <rect x={left} y={px(spec.last)} width={right - left} height={1} fill={SLATE} />
          {spec.candles.split(';').map((c, i) => {
            const [dir, ...v] = c.split(' ');
            const [hi, top, bottom, lo] = v.map((n) => px(+n));
            const x = left + 8 * i;
            return (
              <g key={i}>
                <rect x={x} y={hi} width={1} height={lo - hi + 1} fill="#000" />
                <rect x={x - 2} y={top} width={5} height={bottom - top + 1} fill="#000" />
                {dir !== 'd' && <rect x={x - 1} y={top + 1} width={3} height={Math.max(0, bottom - top - 1)} fill={FILL[dir]} />}
              </g>
            );
          })}
        </g>
        {spec.dots.flatMap(([from, to, y]) =>
          Array.from({ length: to - from + 1 }, (_, i) => (
            <circle key={`${from}-${i}-${y}`} cx={left + 8 * (from + i) + 0.5} cy={px(y) + 0.5} r="2.5" fill="#000" />
          )),
        )}
        <g clipPath={`url(#${clip})`}>
          {spec.tags.map((t) => (
            <Tag key={t.text} tag={t} left={left} />
          ))}
          {spec.arrows.map(([x, y, fill]) => (
            <path key={`${x}-${y}`} d={`M${px(x) + 0.5} ${px(y) - 3}l3.500 3.500-3.500 3.500-3.500-3.500z`} fill={fill} />
          ))}
        </g>
        <g shapeRendering="crispEdges">
          {spec.volumes.split(' ').map((v, i) => {
            const top = px(+v.slice(1));
            const x = Math.max(left, left + 8 * i - 2);
            return <rect key={i} x={x} y={top} width={left + 8 * i + 2 - x} height={Math.max(1, px(spec.volBase) - top + 1)} fill={v[0] === 'g' ? GREEN : '#ff0000'} />;
          })}
          <g fill="none" stroke="#000">
            <rect x={left + 0.5} y={35.5} width={right - left} height={mainBottom - 35} />
            <rect x={left + 0.5} y={volTop + 0.5} width={right - left} height={383 - volTop} />
            <path d={`M${right} ${volTop + 1.5}h4M${right} 382.5h4`} />
            {spec.times.map((t, i) => (
              <path key={t} d={`M${left + 64 * i + 0.5} 383v4`} />
            ))}
            {spec.levels.map((y) => (
              <path key={y} d={`M${right} ${px(y) + 0.5}h4`} />
            ))}
          </g>
          <path d={`M${spec.marker - 4} 36h9l-4 4h-1z`} fill={SLATE} />
        </g>
        {spec.prices.map((p, i) => (
          <text key={i} x={axisX} y={px(spec.levels[i]) + 4}>{p}</text>
        ))}
        <rect x={right + 3} y={px(spec.last) - 5} width={spec.lastText.length > 7 ? 44 : 39} height={11} fill={SLATE} />
        <text x={axisX} y={px(spec.last) + 4} fill="#fff">{spec.lastText}</text>
        <text x={axisX} y={volTop + 9}>{spec.volMax}</text>
        <text x={axisX} y={381}>0</text>
        <rect x={axisX + 3} y={372} width={20} height={10} fill="#fff" />
        <text x={axisX + 3} y={381}>{spec.volMin}</text>
        <g>
          <rect x={left + 4.5} y={39.5} width={13} height={11} fill="#fff" stroke="#4a4a90" />
          <path d={`M${left + 5} 41h12`} stroke="#8a8ad0" strokeWidth="2" />
          <path d={`M${left + 6} 44h5M${left + 6} 46h5M${left + 6} 48h5`} stroke="#f08060" />
          <path d={`M${left + 12} 44h4M${left + 12} 46h4M${left + 12} 48h4`} stroke="#7070e0" />
          <path d={`M${left + 21} 40h3v5h4v6h-7z`} fill="#2222dd" />
          <path d={`M${left + 36} 40h-3v5h-4v6h7z`} fill="#c83232" />
          <path d={`M${left + 25} 40.5h7M${left + 26} 43.500h5`} stroke="#666" />
        </g>
        <text x={left + 42} y={49} xmlSpace="preserve">{spec.title}</text>
        {spec.comment && <text x={left + 4} y={63}>{spec.comment}</text>}
        <text x={left + 4} y={volTop + 13}>{spec.volName}</text>
        {spec.times.map((t, i) => (
          <text key={t} x={left + 64 * i} y={396}>{t}</text>
        ))}
        {spec.expert && (
          <g>
            <text x={right - 21} y={50} textAnchor="end">{spec.expert}</text>
            <svg x={right - 18} y={37} width="17" height="17" overflow="visible">
              <path d="M1 3l7-3 6 2v5q-6 4-12 0z" fill="#8a8a8a" />
              <path d="M0 13l6-5 4 7-6 1z" fill="#8ccbf2" />
              <circle cx="11" cy="10.500" r="4.500" fill="#e8f8e0" stroke="#3a9a22" strokeWidth="1.500" />
              <path d="M9.500 8l3.500 2.500-3.500 2.500z" fill="#3a9a22" />
            </svg>
          </g>
        )}
      </g>
    </svg>
  );
};

const EpuOverlay = () => (
  <g shapeRendering="crispEdges">
    <g fill="#b0b0f8">
      <rect x="12" y="36" width="711" height="6" />
      <rect x="12" y="57" width="711" height="6" />
      <rect x="205" y="82" width="518" height="6" />
    </g>
    <g fill="#d0d0f8">
      <rect x="629" y="184" width="94" height="6" />
      <rect x="677" y="202" width="46" height="6" />
      <rect x="687" y="276" width="36" height="6" />
      <rect x="701" y="283" width="22" height="6" />
    </g>
    <rect x="723" y="36" width="3" height="346" fill="#46aa74" />
    <g fill="#000" stroke="#2f8f60">
      <rect x="720.5" y="36.5" width="8" height="8" />
      <rect x="720.5" y="312.5" width="8" height="8" />
    </g>
    <rect x="685" y="388" width="78" height="11" fill="#46aa74" />
    <text x="724" y="397" fill="#fff" textAnchor="middle">2021.06.18 14:25</text>
  </g>
);

/* ---------- window assembly ---------- */

interface ChartWindowProps { name: string; spec: ChartSpec; row: number; col: number; active?: boolean; overlay?: React.ReactNode; children?: React.ReactNode }

const ChartWindow = ({ name, spec, row, col, active, overlay, children }: ChartWindowProps) => {
  const ink = active ? '#000' : '#999';
  return (
    <Window $active={active} $row={row} $col={col}>
      <WindowHead>
        <ChartWindowIcon />
        <WindowTitle>{name}</WindowTitle>
        <WindowButton aria-label="Свернуть">
          <Svg s={10}><path d="M0 9h9" stroke={ink} strokeWidth="2" /></Svg>
        </WindowButton>
        <WindowButton aria-label="Развернуть">
          <Svg s={10}><path d="M.5 1h9v8.500h-9z" stroke={ink} /><path d="M0 1h10" stroke={ink} strokeWidth="2" /></Svg>
        </WindowButton>
        <WindowButton aria-label="Закрыть">
          <Svg s={10}><path d="M1 1l8 8M9 1L1 9" stroke={ink} strokeWidth="2" /></Svg>
        </WindowButton>
      </WindowHead>
      <Client>
        <Chart spec={spec}>{overlay}</Chart>
        {children}
      </Client>
    </Window>
  );
};

const MENU = ['Файл', 'Вид', 'Вставка', 'Графики', 'Сервис', 'Окно', 'Справка'];
const PERIODS = ['M1', 'M5', 'M15', 'M30', 'H1', 'H4', 'D1', 'W1', 'MN'];
const CHART_TABS = ['EPU21,M5', 'MESU21,M1', 'EPU21,M1', 'MNQU21,M1'];
const PANEL_TABS = ['Торговля', 'Активы', 'История', 'Новости', 'Почта', 'Календарь', 'Компания', 'Алерты', 'Статьи', 'Библиотека', 'Эксперты', 'Журнал'];
const COLUMNS: [string, number | undefined][] = [
  ['Время', 158], ['Символ', 110], ['Тикет', 86], ['Тип', 72], ['Объем', 122], ['Цена', 123], ['S / L', 121],
  ['T / P', 122], ['Время', 140], ['Цена', 122], ['Комиссия', 122], ['Прибыль', 134], ['Изменение', 101], ['Комментарий', undefined],
];

const Arrow = ({ d, w = 5, h = 7 }: { d: string; w?: number; h?: number }) => (
  <Svg s={w} h={h}><path d={d} fill="#8a8a8a" /></Svg>
);

export default function App() {
  return (
    <Page>
      <GlobalStyle />
      <TitleBar>
        <AppLogo />
        <TitleText>1249440 - AMPGlobalEU-Demo: Демо-счет - Netting - EPU21,M5</TitleText>
        <CaptionButton aria-label="Свернуть"><Svg s={10}><path d="M0 5.500h10" stroke="#000" /></Svg></CaptionButton>
        <CaptionButton aria-label="Восстановить">
          <Svg s={10}><path d="M.5 2.500h7v7h-7zM2.500 2.500v-2h7v7h-2" stroke="#000" /></Svg>
        </CaptionButton>
        <CaptionButton aria-label="Закрыть"><Svg s={10}><path d="M0 0l10 10M10 0L0 10" stroke="#000" /></Svg></CaptionButton>
      </TitleBar>

      <MenuBar aria-label="Меню">
        {MENU.map((m) => <MenuItem key={m}>{m}</MenuItem>)}
      </MenuBar>

      <ToolRow>
        <ToolBar role="toolbar" aria-label="Стандартная">
          <Grip />
          <ToolButton aria-label="Новый график"><NewChartIcon /></ToolButton>
          <CaretButton aria-label="Список символов"><Caret /></CaretButton>
          <ToolButton aria-label="Профили"><ProfilesIcon /></ToolButton>
          <CaretButton aria-label="Список профилей"><Caret /></CaretButton>
          <ToolButton aria-label="Символы"><SymbolsIcon /></ToolButton>
          <ToolSep />
          <ToolButton aria-label="MetaEditor"><EditorIcon /></ToolButton>
          <ToolButton aria-label="Маркет"><MarketIcon /></ToolButton>
          <ToolButton aria-label="Сигналы"><SignalsIcon /></ToolButton>
          <ToolButton aria-label="VPS"><VpsIcon /></ToolButton>
          <ToolButton aria-label="Сообщество"><CommunityIcon /></ToolButton>
          <ToolSep />
          <ToolButton $on $w={111}><AlgoIcon />Алготрейдинг</ToolButton>
          <ToolButton $w={108}><OrderIcon />Новый ордер</ToolButton>
          <ToolSep />
          <ToolButton aria-label="Бары"><BarsIcon /></ToolButton>
          <ToolButton $on aria-label="Свечи"><CandlesIcon /></ToolButton>
          <ToolButton aria-label="Линия"><LineIcon /></ToolButton>
          <ToolSep />
          <ToolButton aria-label="Увеличить"><ZoomIcon plus /></ToolButton>
          <ToolButton aria-label="Уменьшить"><ZoomIcon /></ToolButton>
          <ToolButton aria-label="Мозаика"><TileIcon /></ToolButton>
          <ToolSep />
          <ToolButton $on aria-label="Автопрокрутка"><ScrollEndIcon /></ToolButton>
          <ToolButton $on aria-label="Сдвиг графика"><ShiftIcon /></ToolButton>
          <ToolSep />
          <ToolButton aria-label="Шаблоны"><TemplateIcon /></ToolButton>
        </ToolBar>
        <ToolBar role="toolbar" aria-label="Графические инструменты">
          <Grip />
          <ToolButton $on aria-label="Курсор"><CursorIcon /></ToolButton>
          <ToolButton aria-label="Перекрестие"><CrosshairIcon /></ToolButton>
          <ToolSep />
          <ToolButton aria-label="Вертикальная линия"><StrokeIcon d="M9 3v14" /></ToolButton>
          <ToolButton aria-label="Горизонтальная линия"><StrokeIcon d="M3 10h14" /></ToolButton>
          <ToolButton aria-label="Трендовая линия"><StrokeIcon d="M4 16L16 4" /></ToolButton>
          <ToolButton aria-label="Канал"><ChannelIcon /></ToolButton>
          <ToolButton aria-label="Фибоначчи"><FiboIcon /></ToolButton>
          <ToolButton aria-label="Текст"><TextIcon /></ToolButton>
          <ToolButton aria-label="Объекты"><ShapesIcon /></ToolButton>
          <CaretButton aria-label="Список объектов"><Caret /></CaretButton>
        </ToolBar>
        <RowEnd>
          <button aria-label="Поиск"><SearchIcon /></button>
          <button aria-label="Профиль"><UserIcon /></button>
          <button aria-label="Уровень"><LevelIcon /></button>
          <Battery />
        </RowEnd>
      </ToolRow>

      <ToolRow>
        <ToolBar role="toolbar" aria-label="Периоды">
          <Grip />
          {PERIODS.map((p) => <PeriodButton key={p} $on={p === 'M5'}>{p}</PeriodButton>)}
        </ToolBar>
      </ToolRow>

      <Workspace>
        <ChartWindow name="EPU21,M5" spec={EPU} row={1} col={1} active overlay={<EpuOverlay />} />
        <ChartWindow name="MESU21,M1" spec={MESU} row={2} col={1}>
          <ExpertPanel $right={63}>
            <ExpertButton>Enable BUY</ExpertButton>
            <ExpertButton>Enable SELL</ExpertButton>
          </ExpertPanel>
        </ChartWindow>
        <ChartWindow name="MNQU21,M1" spec={MNQU} row={2} col={2}>
          <ExpertPanel $right={69}>
            <ExpertButton $live>Disable BUY</ExpertButton>
            <ExpertButton>Enable SELL</ExpertButton>
          </ExpertPanel>
        </ChartWindow>
      </Workspace>

      <TabStrip>
        {CHART_TABS.map((t, i) => (
          <StripTab key={t} $on={i === 0} $line={i === 1 || i === 2}>{t}</StripTab>
        ))}
        <StripEnd>
          <button aria-label="Назад"><Arrow d="M5 0v7L1 3.500z" /></button>
          <button aria-label="Вперёд"><Arrow d="M0 0v7l4-3.500z" /></button>
        </StripEnd>
      </TabStrip>

      <Toolbox>
        <ToolboxRail>
          <RailClose aria-label="Закрыть панель">
            <Svg s={6}><path d="M.5.5l5 5M5.500.5l-5 5" stroke="#000" strokeWidth="1.500" /></Svg>
          </RailClose>
          <RailName>Инструменты</RailName>
        </ToolboxRail>
        <ToolboxBody>
          <Grid>
            <Deals>
              <colgroup>
                {COLUMNS.map(([name, w], i) => <col key={name + i} style={w ? { width: w } : undefined} />)}
              </colgroup>
              <thead>
                <tr>
                  {COLUMNS.map(([name], i) => (
                    <HeadCell key={name + i} $left={i === 0} scope="col">
                      {name}
                      {i === 8 && <Svg s={8} h={4}><path d="M0 4h8L4 0z" fill="#333" /></Svg>}
                    </HeadCell>
                  ))}
                </tr>
              </thead>
              <tbody>
                <tr>
                  <Cell $left><CellInner><DocIcon />2021.06.18 14:29:00</CellInner></Cell>
                  <Cell>mnqu21</Cell>
                  <Cell>135467597</Cell>
                  <Cell>buy</Cell>
                  <Cell>1</Cell>
                  <Cell>14100.50</Cell>
                  <Cell>14101.00</Cell>
                  <Cell $tone="hit">14104.75</Cell>
                  <Cell>2021.06.18 14:29:13</Cell>
                  <Cell>14105.00</Cell>
                  <Cell>-0.70</Cell>
                  <Cell $tone="profit">7.59</Cell>
                  <Cell $tone="profit">0.03 %</Cell>
                  <Cell>Sign_2</Cell>
                </tr>
                <tr>
                  <SumCell colSpan={10}>
                    <CellInner><ExpandIcon />Прибыль: 23.10&nbsp; Кредит: 0.00&nbsp; Депозит: 0.00&nbsp; Снятие: 0.00&nbsp; Баланс: 23.10</CellInner>
                  </SumCell>
                  <SumCell>-2.80</SumCell>
                  <SumCell>25.90</SumCell>
                  <SumCell colSpan={2} />
                </tr>
              </tbody>
            </Deals>
            <Scroll>
              <ScrollButton aria-label="Вверх"><Svg s={8} h={6}><path d="M0 5l4-4 4 4" stroke="#555" strokeWidth="2" /></Svg></ScrollButton>
              <ScrollThumb />
              <ScrollButton aria-label="Вниз"><Svg s={8} h={6}><path d="M0 1l4 4 4-4" stroke="#555" strokeWidth="2" /></Svg></ScrollButton>
            </Scroll>
          </Grid>
          <PanelTabs>
            {PANEL_TABS.map((t, i) => (
              <PanelTab key={t} $on={i === 2} $line={i !== 1 && i !== 2 && i !== PANEL_TABS.length - 1}>
                {t}
                {t === 'Почта' && <Unread>7</Unread>}
              </PanelTab>
            ))}
            <Services>
              <Service><MarketIcon s={16} />Маркет</Service>
              <Service><SignalsIcon s={16} />Сигналы</Service>
              <Service><VpsIcon s={16} />VPS</Service>
              <Service><TesterIcon />Тестер стратегий</Service>
            </Services>
          </PanelTabs>
        </ToolboxBody>
      </Toolbox>

      <StatusBar>
        <StatusField>Для вызова справки нажмите F1</StatusField>
        <StatusField $w={128}>Default</StatusField>
        <StatusField $w={98} />
        <StatusField $w={72} />
        <StatusField $w={70} />
        <StatusField $w={68} />
        <StatusField $w={70} />
        <StatusField $w={66} />
        <StatusField $w={120}><TrafficIcon />25.5 / 0.0 Mb</StatusField>
      </StatusBar>
    </Page>
  );
}
